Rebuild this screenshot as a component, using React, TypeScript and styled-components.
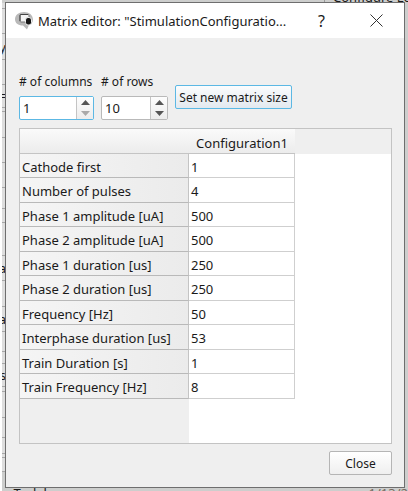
import React, { useState } from "react";
import styled, { createGlobalStyle } from "styled-components";

const GlobalStyle = createGlobalStyle`
  * { box-sizing: border-box; }
  html, body, #root { height: 100%; margin: 0; }
  body, button, input { font-family: "Noto Sans", "Open Sans", sans-serif; font-size: 12px; color: #1a1a1a; }
`;

const Desktop = styled.div`
  position: relative;
  min-height: 100vh;
  display: flex;
  overflow: hidden;
  background: #cdcecd;
  padding: 2px 3px 3px 5px;
`;

const Backdrop = styled.div`
  position: absolute;
  inset: 0;
  display: flex;
  flex-direction: column;
  overflow: hidden;
  border-left: 2px solid #fff;
`;

const BackdropRow = styled.div`
  display: flex;
  justify-content: space-between;
  height: 3px;
  line-height: 18px;
  font-size: 13px;
  overflow: hidden;
`;

const BackdropTop = styled.span`
  margin: -12px 0 0 auto;
  padding-left: 8px;
  border-left: 1px solid #999;
  width: 84px;
  white-space: nowrap;
`;

const BackdropSide = styled.div`
  flex: 1;
  min-height: 0;
  width: 4px;
  overflow: hidden;
`;

const SideCell = styled.div<{ $h: number }>`
  display: flex;
  justify-content: flex-end;
  align-items: center;
  height: ${(p) => p.$h}px;
  border-bottom: 1px solid #a8a8a8;
  background: #dedede;
  font-size: 13px;
  overflow: hidden;
`;

const BackdropTail = styled.span<{ $color?: string }>`
  margin-top: -4px;
  color: ${(p) => p.$color ?? "#1a1a1a"};
`;

const Dialog = styled.main`
  position: relative;
  flex: 1;
  min-width: 0;
  display: flex;
  flex-direction: column;
  background: #efefef;
  border: 1px solid #6e6e6e;
`;

const TitleBar = styled.header`
  display: flex;
  align-items: center;
  height: 35px;
  padding-left: 9px;
  background: #fff;
`;

const Title = styled.h1`
  flex: 1;
  min-width: 0;
  margin: 0 0 0 5px;
  font-size: 13px;
  font-weight: 400;
  white-space: nowrap;
`;

const TitleButton = styled.button`
  display: grid;
  place-items: center;
  width: 55px;
  height: 34px;
  border: 0;
  padding: 0;
  background: transparent;
  font-size: 16px;
`;

const Body = styled.div`
  flex: 1;
  display: flex;
  flex-direction: column;
  padding: 35px 12px 12px 13px;
`;

const Controls = styled.div`
  display: flex;
  align-items: flex-end;
  gap: 7px;
  margin-bottom: 8px;
`;

const Field = styled.label`
  display: flex;
  flex-direction: column;
  gap: 6px;
  line-height: 17px;
  white-space: nowrap;
`;

const SpinBox = styled.div<{ $focus?: boolean; $width: number }>`
  display: flex;
  width: ${(p) => p.$width}px;
  height: 24px;
  border: 1px solid ${(p) => (p.$focus ? "#5cb8e4" : "#b9b9b9")};
  border-radius: 2px;
  background: #fff;
`;

const SpinInput = styled.input`
  flex: 1;
  min-width: 0;
  border: 0;
  padding: 0 3px;
  outline: 0;
  background: transparent;
  font-size: 13px;
`;

const Steppers = styled.div`
  display: flex;
  flex-direction: column;
  width: 17px;
  border-left: 1px solid #c4c4c4;
  background: linear-gradient(#fdfdfd, #ececec);
`;

const StepButton = styled.button`
  flex: 1;
  display: grid;
  place-items: center;
  border: 0;
  padding: 0;
  background: transparent;
  color: #555;
  &:disabled { color: #a9a9a9; }
`;

const PushButton = styled.button<{ $focus?: boolean }>`
  height: 24px;
  padding: 0 3px;
  border: 1px solid ${(p) => (p.$focus ? "#5cb8e4" : "#b5b5b5")};
  border-radius: 2px;
  background: ${(p) => (p.$focus ? "linear-gradient(#fbfcfd, #e3e9ef)" : "linear-gradient(#fff, #efefef)")};
  white-space: nowrap;
`;

const SizeButton = styled(PushButton)`
  min-width: 117px;
  margin-bottom: 11px;
`;

const CloseButton = styled(PushButton)`
  align-self: flex-end;
  width: 63px;
  margin-top: 7px;
`;

const TableFrame = styled.div`
  flex: 1;
  display: flex;
  flex-direction: column;
  border: 1px solid #c3c3c3;
  background: linear-gradient(#efefef, #efefef) 0 0 / 100% 25px no-repeat,
    linear-gradient(90deg, #efefef 169px, #fff 169px);
`;

const Grid = styled.table`
  width: 275px;
  border-collapse: separate;
  border-spacing: 0;
  table-layout: fixed;
  font-size: 13px;
  line-height: 20px;
`;

const HeadCell = styled.th`
  height: 25px;
  padding: 3px 0 0;
  border-bottom: 1px solid #c4c4c4;
  background: linear-gradient(#fafafa, #ececec);
  font-weight: 400;
  &:first-child { width: 169px; }
`;

const Row = styled.tr`
  height: 24px;
  &:nth-child(even) { height: 25px; }
`;

const RowHead = styled.th`
  padding: 2px 2px 0;
  border-right: 1px solid #c4c4c4;
  border-bottom: 1px solid #b9b9b9;
  background: linear-gradient(90deg, #f5f5f5, #ebebeb);
  font-weight: 400;
  text-align: left;
  white-space: nowrap;
`;

const Cell = styled.td`
  padding: 2px 2px 0;
  border-right: 1px solid #cfcfcf;
  border-bottom: 1px solid #cfcfcf;
  background: #fff;
`;

const AppIcon = () => (
  <svg width="18" height="19" viewBox="0 0 18 19" aria-hidden="true">
    <path d="M9 1C14 1 18 4 18 8.500c0 3-2 5-4 5.500l-2 4.500L8 14.500C3 14.500 0 12 0 8.200 0 4 4 1 9 1z" fill="#b9b9b9" />
    <rect x="5" y="3.500" width="9" height="7.500" rx="1" fill="#f4f4f4" stroke="#777" />
    <path d="M5 10V4.500a1 1 0 0 1 1-1h7" fill="none" stroke="#444" />
    <rect x="10.500" y="6.500" width="6" height="7.500" rx="2.500" fill="#151515" stroke="#eee" />
  </svg>
);

const CloseIcon = () => (
  <svg width="13" height="13" viewBox="0 0 13 13" aria-hidden="true">
    <path d="M.5.5l12 12M12.500.5l-12 12" stroke="#333" fill="none" />
  </svg>
);

const Arrow = ({ down }: { down?: boolean }) => (
  <svg width="9" height="5" viewBox="0 0 9 5" aria-hidden="true">
    <path d={down ? "M0 0h9L4.500 5z" : "M0 5h9L4.500 0z"} fill="currentColor" />
  </svg>
);

const rows: [string, string][] = [
  ["Cathode first", "1"],
  ["Number of pulses", "4"],
  ["Phase 1 amplitude [uA]", "500"],
  ["Phase 2 amplitude [uA]", "500"],
  ["Phase 1 duration [us]", "250"],
  ["Phase 2 duration [us]", "250"],
  ["Frequency [Hz]", "50"],
  ["Interphase duration [us]", "53"],
  ["Train Duration [s]", "1"],
  ["Train Frequency [Hz]", "8"],
];

const sideCells: [number, string][] = [
  [6, ""], [25, ""], [26, "y"], [25, ""], [23, "="], [4, ""], [26, ""], [25, ""],
  [25, ""], [21, ""], [14, ""], [33, ""], [25, "a"], [26, ""], [25, "a"], [20, ""],
  [12, ""], [23, "s"], [5, ""], [26, ""], [20, ""], [16, ""], [4, ""], [14, ""],
];

interface SpinProps { label: string; start: number; width: number; focus?: boolean }

const Spin = ({ label, start, width, focus }: SpinProps) => {
  const [value, setValue] = useState(start);
  return (
    <Field>
      {label}
      <SpinBox $focus={focus} $width={width}>
        <SpinInput aria-label={label} value={value} onChange={(e) => setValue(Number(e.target.value) || 1)} />
        <Steppers>
          <StepButton aria-label="Increase" onClick={() => setValue(value + 1)}><Arrow /></StepButton>
          <StepButton aria-label="Decrease" disabled={value <= 1} onClick={() => setValue(value - 1)}><Arrow down /></StepButton>
        </Steppers>
      </SpinBox>
    </Field>
  );
};

export default function App() {
  return (
    <Desktop>
      <GlobalStyle />
      <Backdrop aria-hidden="true">
        <BackdropRow><BackdropTop>Configure Lou</BackdropTop></BackdropRow>
        <BackdropSide>
          {sideCells.map(([h, text], i) => <SideCell key={i} $h={h}>{text}</SideCell>)}
        </BackdropSide>
        <BackdropRow>
          <BackdropTail>n Task bar</BackdropTail>
          <BackdropTail $color="#76685c">1/13/2</BackdropTail>
        </BackdropRow>
      </Backdrop>
      <Dialog>
        <TitleBar>
          <AppIcon />
          <Title>Matrix editor: "StimulationConfiguratio...</Title>
          <TitleButton aria-label="Help">?</TitleButton>
          <TitleButton aria-label="Close window"><CloseIcon /></TitleButton>
        </TitleBar>
        <Body>
          <Controls>
            <Spin label="# of columns" start={1} width={75} focus />
            <Spin label="# of rows" start={10} width={67} />
            <SizeButton $focus>Set new matrix size</SizeButton>
          </Controls>
          <TableFrame>
            <Grid>
              <thead>
                <tr><HeadCell /><HeadCell scope="col">Configuration1</HeadCell></tr>
              </thead>
              <tbody>
                {rows.map(([name, value]) => (
                  <Row key={name}><RowHead scope="row">{name}</RowHead><Cell>{value}</Cell></Row>
                ))}
              </tbody>
            </Grid>
          </TableFrame>
          <CloseButton>Close</CloseButton>
        </Body>
      </Dialog>
    </Desktop>
  );
}
